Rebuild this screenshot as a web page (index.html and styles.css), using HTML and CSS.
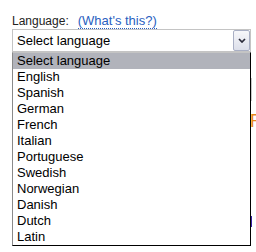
FILE: index.html
```html
<!DOCTYPE html>
<html lang="en">
<head>
  <meta charset="UTF-8">
  <meta name="viewport" content="width=device-width, initial-scale=1.0">
  <title>Language</title>
  <link rel="stylesheet" href="styles.css">
</head>
<body>
  <div class="form">
    <div class="label-row">
      <span class="label">Language:</span>
      <a class="help" href="#">(What's this?)</a>
    </div>

    <div class="picker">
      <div class="select">
        <span class="value">Select language</span>
        <span class="arrow">
          <svg width="8" height="5" viewBox="0 0 8 5"><path d="M1 1 L4 4 L7 1" fill="none" stroke="#2b2b3a" stroke-width="1.7"/></svg>
        </span>
      </div>
      <ul class="options">
        <li class="selected">Select language</li>
        <li>English</li>
        <li>Spanish</li>
        <li>German</li>
        <li>French</li>
        <li>Italian</li>
        <li>Portuguese</li>
        <li>Swedish</li>
        <li>Norwegian</li>
        <li>Danish</li>
        <li>Dutch</li>
        <li>Latin</li>
      </ul>
    </div>

    <input class="name-input" type="text">
    <div class="promo">R</div>
    <div class="submit"></div>
  </div>
</body>
</html>
```

FILE: styles.css
```css
body {
  margin: 0;
  width: 256px;
  height: 252px;
  overflow: hidden;
  background-color: #fff;
  font-family: "Liberation Sans", Arial, sans-serif;
  color: #000;
}
.form {
  padding: 13px 0 0 12px;
}
.label-row {
  display: flex;
  align-items: baseline;
  height: 16px;
  line-height: 16px;
}
.label {
  font-size: 12px;
  color: #222;
}
.help {
  margin-left: 9px;
  font-size: 13px;
  color: #2a5fbf;
  text-decoration: none;
  border-bottom: 1px dotted #2a5fbf;
  line-height: 14px;
}
.picker {
  position: relative;
  width: 239px;
}
.select {
  box-sizing: border-box;
  width: 239px;
  height: 23px;
  border: 1px solid #c4c4c4;
  display: flex;
  align-items: center;
  padding-left: 4px;
  font-size: 13px;
}
.value {
  flex: 1;
  line-height: 21px;
}
.arrow {
  box-sizing: border-box;
  width: 17px;
  height: 21px;
  border: 1px solid #a9afc4;
  border-radius: 2px;
  background: linear-gradient(#f7f7fa, #dcdfea);
  display: flex;
  align-items: center;
  justify-content: center;
}
.options {
  position: absolute;
  top: 23px;
  left: 0;
  box-sizing: border-box;
  width: 239px;
  margin: 0;
  padding: 0;
  list-style: none;
  background-color: #fff;
  border-top: 1px solid #c4c4c4;
  border-left: 1px solid #8a8a8a;
  border-right: 1px solid #000;
  border-bottom: 1px solid #000;
  font-size: 13px;
  z-index: 2;
}
.options li {
  height: 16px;
  line-height: 16px;
  padding-left: 4px;
  white-space: nowrap;
}
.options li.selected {
  background-color: #b1b3bb;
}
.name-input {
  display: block;
  box-sizing: border-box;
  width: 240px;
  height: 23px;
  margin-top: 26px;
  border: 1px solid #c8c8c8;
}
.promo {
  margin-top: 9px;
  padding-left: 238px;
  white-space: nowrap;
  font-size: 18px;
  color: #e8861c;
  line-height: 22px;
}
.submit {
  margin: 84px 0 0 238px;
  width: 2px;
  height: 11px;
  background-color: #3a22a8;
}
```
